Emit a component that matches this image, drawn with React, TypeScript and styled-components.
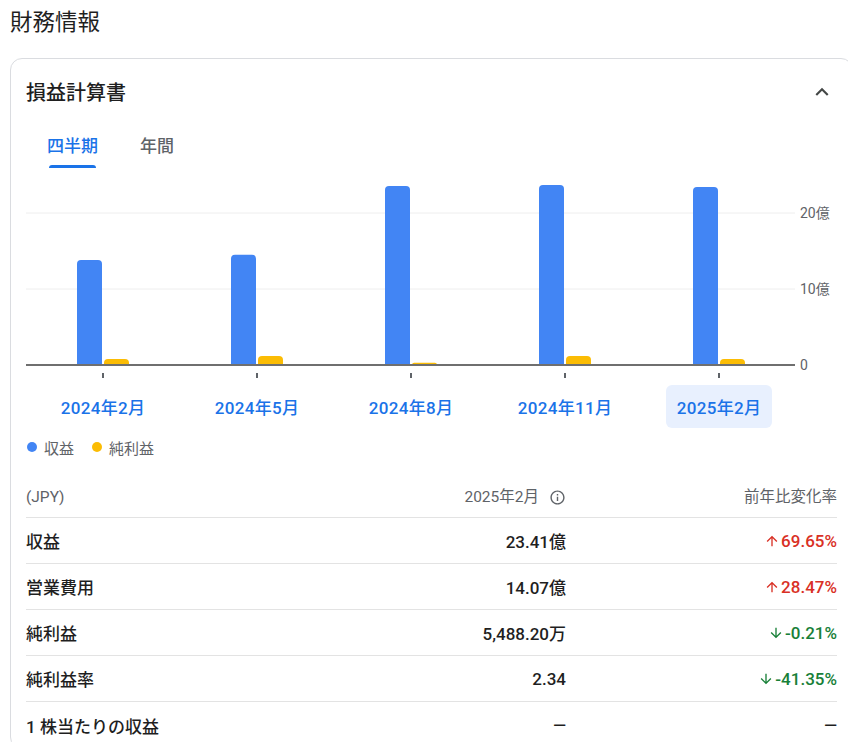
import React from 'react';
import styled, { createGlobalStyle } from 'styled-components';
import { MdExpandLess, MdInfoOutline, MdArrowUpward, MdArrowDownward } from 'react-icons/md';

const GlobalStyle = createGlobalStyle`
  html, body {
    margin: 0;
    padding: 0;
    background: #fff;
    overflow: hidden;
  }
  body {
    font-family: Roboto, "Noto Sans CJK JP", sans-serif;
    color: #1f1f1f;
  }
`;

const Page = styled.main`
  width: 848px;
  padding-left: 10px;
  box-sizing: border-box;
`;

const Heading = styled.h2`
  margin: 0 0 14px 0;
  height: 44px;
  line-height: 44px;
  font-size: 22.5px;
  font-weight: 400;
  color: #1f1f1f;
`;

const Card = styled.section`
  width: 843px;
  box-sizing: border-box;
  border: 1px solid #dadce0;
  border-radius: 12px;
  padding: 0 15px;
`;

const CardHeader = styled.div`
  height: 65px;
  display: flex;
  align-items: center;
  justify-content: space-between;
  h3 {
    margin: 0;
    font-size: 20px;
    font-weight: 500;
    color: #1f1f1f;
  }
  svg {
    color: #444746;
    margin-right: 2px;
  }
`;

const Tabs = styled.div`
  display: flex;
  gap: 42px;
  padding-left: 21px;
  height: 44px;
`;

const Tab = styled.div<{ $active?: boolean }>`
  position: relative;
  display: flex;
  align-items: center;
  padding-bottom: 4px;
  font-size: 17px;
  font-weight: 500;
  color: ${(p) => (p.$active ? '#1a73e8' : '#5f6368')};
  &::after {
    content: '';
    display: ${(p) => (p.$active ? 'block' : 'none')};
    position: absolute;
    left: 2px;
    right: 2px;
    bottom: 0;
    height: 3px;
    border-radius: 3px 3px 0 0;
    background: #1a73e8;
  }
`;

const Chart = styled.div`
  display: flex;
  flex-direction: column;
  svg {
    display: block;
    overflow: visible;
  }
`;

const XLabels = styled.div`
  display: grid;
  grid-template-columns: repeat(5, 154px);
  margin-top: 2px;
`;

const XLabel = styled.div<{ $selected?: boolean }>`
  justify-self: center;
  height: 43px;
  display: flex;
  align-items: center;
  padding: 0 11px;
  border-radius: 6px;
  font-size: 17px;
  font-weight: 500;
  letter-spacing: 0.3px;
  color: #1a73e8;
  background: ${(p) => (p.$selected ? '#e8f0fe' : 'transparent')};
`;

const Legend = styled.div`
  height: 38px;
  display: flex;
  align-items: center;
  gap: 18px;
  padding-left: 1px;
`;

const LegendItem = styled.span<{ $color: string }>`
  display: flex;
  align-items: center;
  gap: 7px;
  font-size: 15px;
  color: #5f6368;
  &::before {
    content: '';
    width: 10px;
    height: 10px;
    border-radius: 50%;
    background: ${(p) => p.$color};
  }
`;

const Table = styled.div`
  display: grid;
  grid-template-columns: 1fr 221px 271px;
`;

const HeadCell = styled.div<{ $align?: string }>`
  height: 52px;
  box-sizing: border-box;
  padding-top: 21px;
  line-height: 20px;
  border-bottom: 1px solid #e3e3e3;
  font-size: 15.5px;
  color: #5f6368;
  display: flex;
  justify-content: ${(p) => (p.$align === 'right' ? 'flex-end' : 'flex-start')};
  gap: 10px;
  svg {
    margin-top: 2px;
  }
`;

const Cell = styled.div<{ $align?: string; $last?: boolean; $tone?: 'up' | 'down' }>`
  height: 46px;
  box-sizing: border-box;
  display: flex;
  align-items: center;
  justify-content: ${(p) => (p.$align === 'right' ? 'flex-end' : 'flex-start')};
  border-bottom: ${(p) => (p.$last ? 'none' : '1px solid #e3e3e3')};
  font-size: 17px;
  font-weight: 500;
  color: ${(p) => (p.$tone === 'up' ? '#d93025' : p.$tone === 'down' ? '#188038' : '#1f1f1f')};
  svg {
    margin-right: 1px;
  }
`;

const periods = ['2024年2月', '2024年5月', '2024年8月', '2024年11月', '2025年2月'];
const revenue = [13.8, 14.5, 23.55, 23.7, 23.41];
const income = [0.8, 1.2, 0.28, 1.2, 0.78];
const SCALE = 7.6;
const BASE = 197;

function barPath(x: number, w: number, h: number) {
  const r = Math.min(4, h);
  const y = BASE - h;
  return `M${x} ${BASE} V${y + r} Q${x} ${y} ${x + r} ${y} H${x + w - r} Q${x + w} ${y} ${x + w} ${y + r} V${BASE} Z`;
}

const rows = [
  { label: '収益', value: '23.41億', change: '69.65%', tone: 'up' as const },
  { label: '営業費用', value: '14.07億', change: '28.47%', tone: 'up' as const },
  { label: '純利益', value: '5,488.20万', change: '-0.21%', tone: 'down' as const },
  { label: '純利益率', value: '2.34', change: '-41.35%', tone: 'down' as const },
  { label: '1 株当たりの収益', value: '—', change: '—' },
];

export default function App(): JSX.Element {
  return (
    <>
      <GlobalStyle />
      <Page>
        <Heading>財務情報</Heading>
        <Card>
          <CardHeader>
            <h3>損益計算書</h3>
            <MdExpandLess size={26} />
          </CardHeader>
          <Tabs>
            <Tab $active>四半期</Tab>
            <Tab>年間</Tab>
          </Tabs>
          <Chart>
            <svg width={810} height={215}>
              <line x1={0} x2={769} y1={45} y2={45} stroke="#eeeeee" strokeWidth={1} />
              <line x1={0} x2={769} y1={121} y2={121} stroke="#eeeeee" strokeWidth={1} />
              {revenue.map((v, i) => {
                const c = 77 + i * 154;
                return (
                  <g key={i}>
                    <path d={barPath(c - 26, 25, v * SCALE)} fill="#4285f4" />
                    <path d={barPath(c + 1, 25, income[i] * SCALE)} fill="#fbbc04" />
                    <rect x={c - 1} y={205} width={2} height={5} fill="#5f6368" />
                  </g>
                );
              })}
              <line x1={0} x2={769} y1={BASE} y2={BASE} stroke="#6f6f6f" strokeWidth={2} />
              <g fontSize={14} fill="#5f6368" fontFamily='Roboto, "Noto Sans CJK JP", sans-serif'>
                <text x={774} y={45} dominantBaseline="central">20億</text>
                <text x={774} y={121} dominantBaseline="central">10億</text>
                <text x={774} y={197} dominantBaseline="central">0</text>
              </g>
            </svg>
            <XLabels>
              {periods.map((p, i) => (
                <XLabel key={p} $selected={i === periods.length - 1}>
                  {p}
                </XLabel>
              ))}
            </XLabels>
          </Chart>
          <Legend>
            <LegendItem $color="#4285f4">収益</LegendItem>
            <LegendItem $color="#fbbc04">純利益</LegendItem>
          </Legend>
          <Table>
            <HeadCell>(JPY)</HeadCell>
            <HeadCell $align="right">
              2025年2月 <MdInfoOutline size={17} />
            </HeadCell>
            <HeadCell $align="right">前年比変化率</HeadCell>
            {rows.map((r, i) => {
              const last = i === rows.length - 1;
              return (
                <React.Fragment key={r.label}>
                  <Cell $last={last}>{r.label}</Cell>
                  <Cell $last={last} $align="right">{r.value}</Cell>
                  <Cell $last={last} $align="right" $tone={r.tone}>
                    {r.tone === 'up' && <MdArrowUpward size={16} />}
                    {r.tone === 'down' && <MdArrowDownward size={16} />}
                    {r.change}
                  </Cell>
                </React.Fragment>
              );
            })}
          </Table>
        </Card>
      </Page>
    </>
  );
}
